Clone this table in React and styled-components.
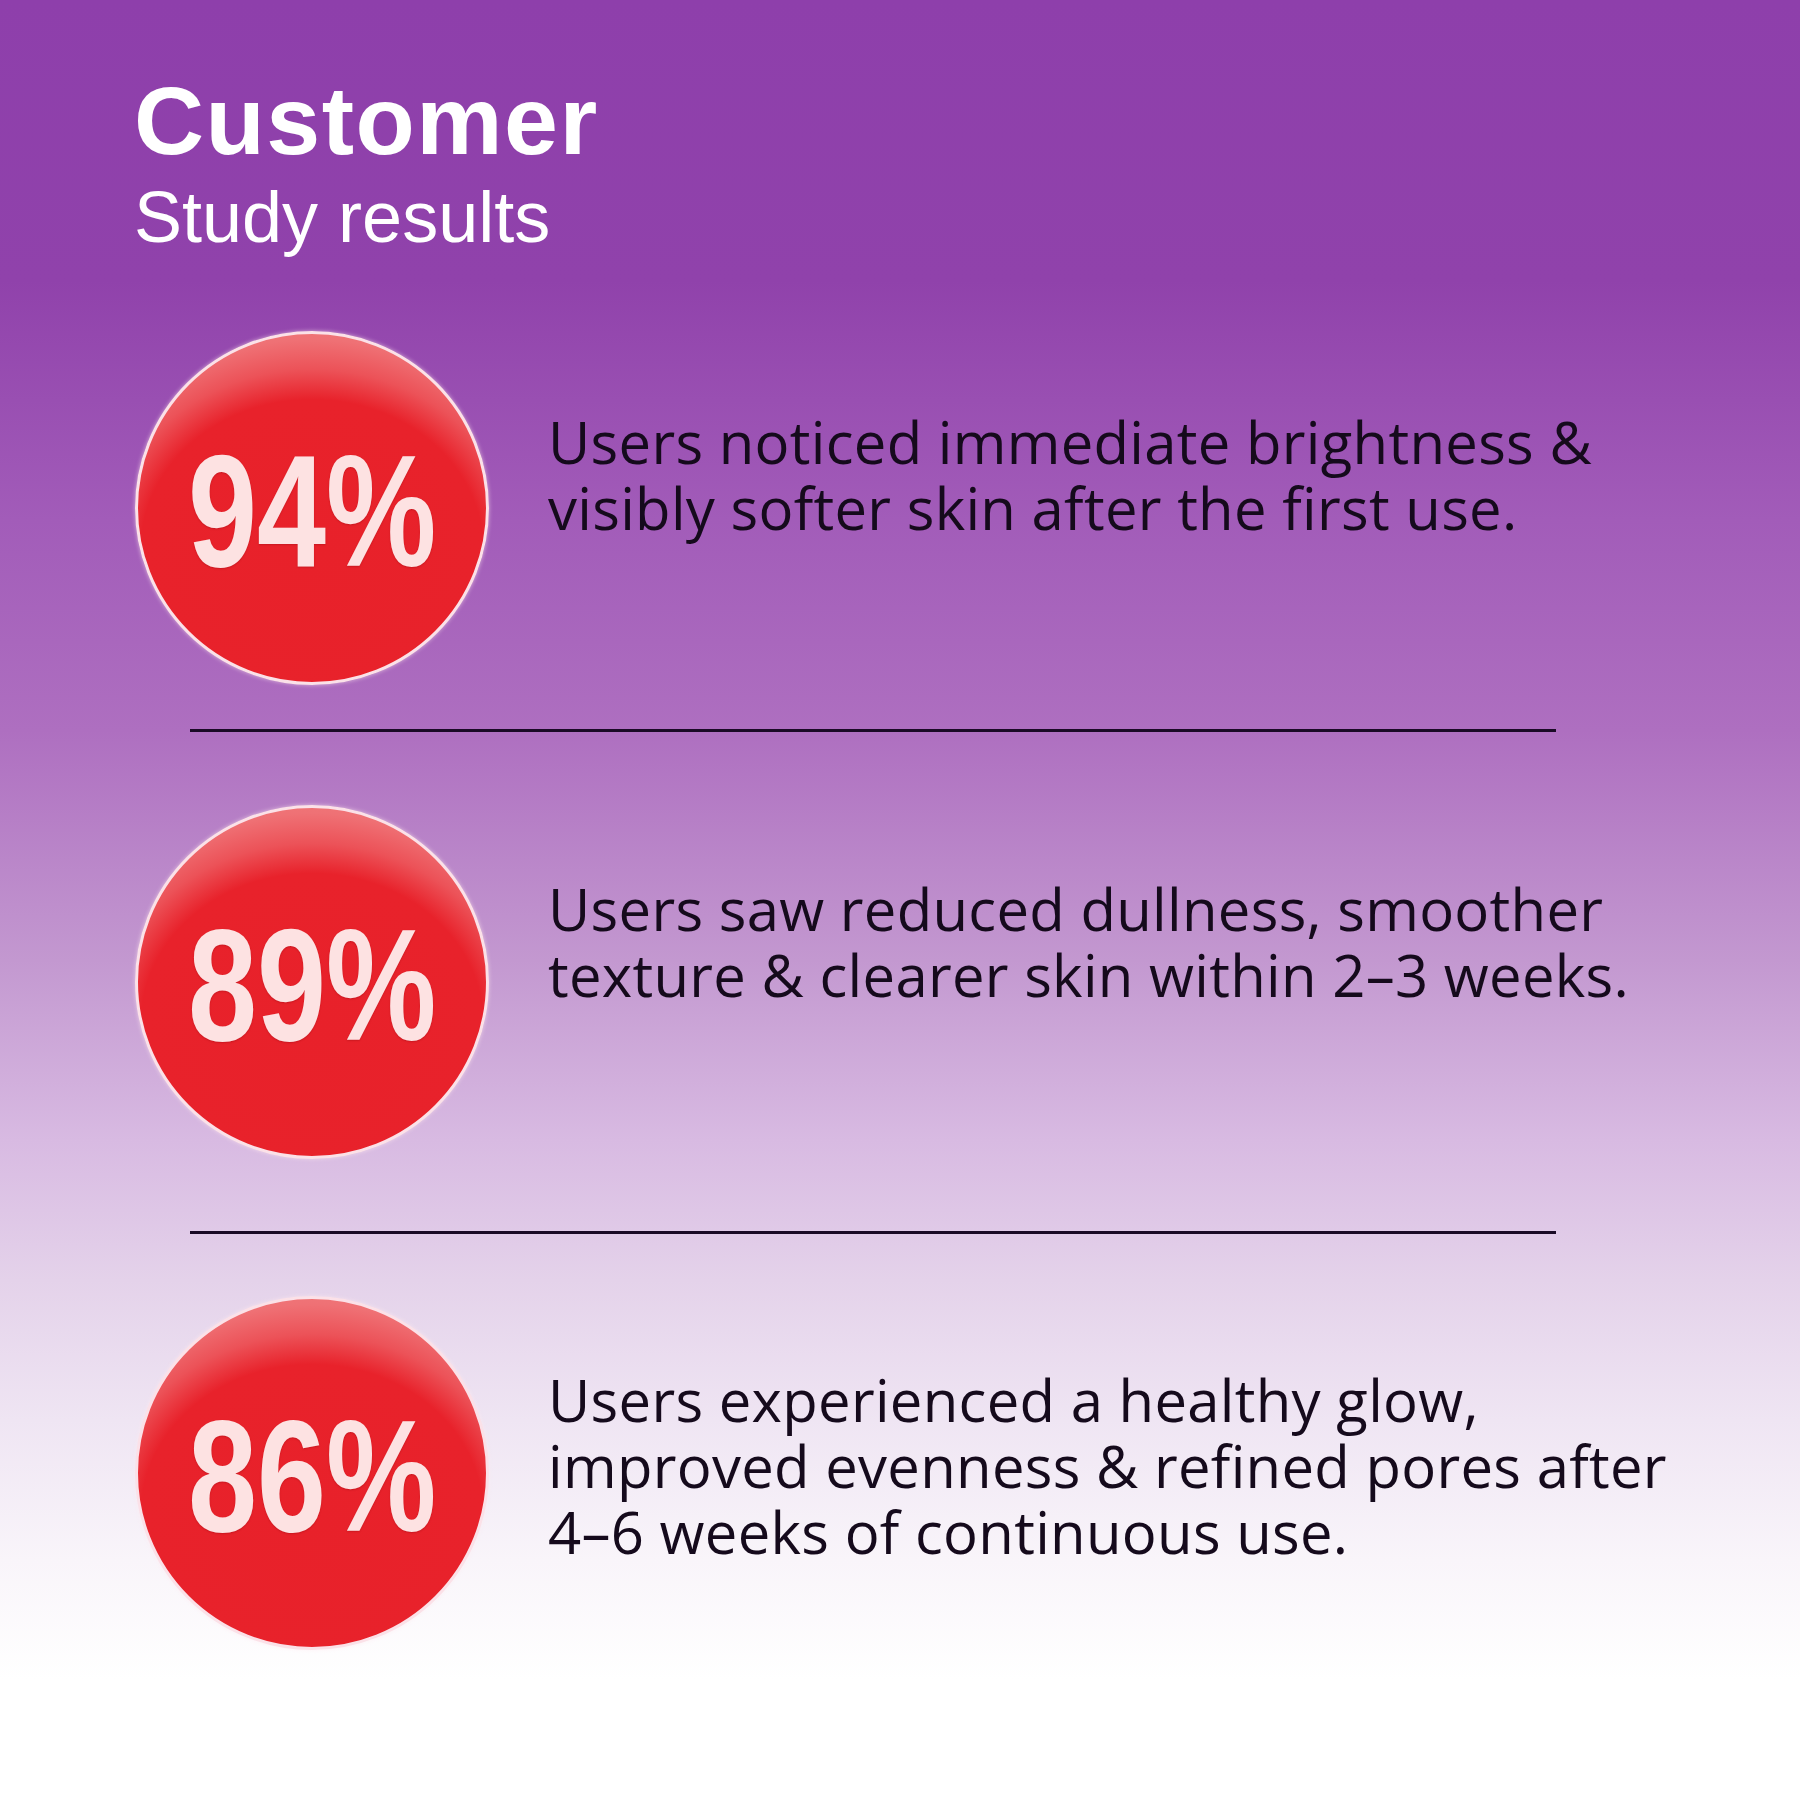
import React from "react";
import styled, { createGlobalStyle } from "styled-components";

const GlobalStyle = createGlobalStyle`
  html, body {
    margin: 0;
    padding: 0;
  }
  * {
    box-sizing: border-box;
  }
`;

const Page = styled.div`
  width: 1800px;
  height: 1800px;
  padding: 73px 0 0 134px;
  overflow: hidden;
  background: linear-gradient(
    180deg,
    #8e3fab 0px,
    #9042ab 280px,
    #a25cb9 520px,
    #ae6fc0 730px,
    #c398d0 960px,
    #d8bae2 1140px,
    #e4d2ea 1280px,
    #efe5f3 1420px,
    #f9f5fa 1560px,
    #ffffff 1680px
  );
`;

const Title = styled.h1`
  margin: 0;
  font-family: "Liberation Sans", Arial, sans-serif;
  font-weight: 700;
  font-size: 97px;
  line-height: 96px;
  letter-spacing: 1.5px;
  color: #ffffff;
`;

const Subtitle = styled.h2`
  margin: 12px 0 0;
  font-family: "Liberation Sans", Arial, sans-serif;
  font-weight: 400;
  font-size: 72px;
  line-height: 72px;
  color: #ffffff;
`;

const List = styled.div`
  display: flex;
  flex-direction: column;
  margin-top: 78px;
`;

const Row = styled.div`
  display: flex;
  align-items: flex-start;
  gap: 59px;
  padding-left: 1px;
`;

const Badge = styled.div`
  flex: 0 0 auto;
  width: 354px;
  height: 354px;
  border-radius: 50%;
  border: 3px solid #fbe1e8;
  display: flex;
  align-items: center;
  justify-content: center;
  background: radial-gradient(
    ellipse 82% 72% at 50% 62%,
    #e8212a 0%,
    #e8222b 60%,
    #ec5258 72%,
    #ef7175 84%,
    #f0807f 100%
  );
  box-shadow: 0 0 4px rgba(255, 235, 240, 0.6);
`;

const Percent = styled.span`
  display: block;
  font-family: "Liberation Sans", Arial, sans-serif;
  font-weight: 700;
  font-size: 159px;
  line-height: 1;
  color: #fde2e2;
  white-space: nowrap;
  transform: translateY(3px) scaleX(0.78);
  text-shadow: 0 1px 2px rgba(130, 0, 10, 0.3);
`;

const Copy = styled.p`
  margin: ${(p) => p.$offset}px 0 0;
  font-family: "Open Sans", "Noto Sans", sans-serif;
  font-weight: 400;
  font-size: 58px;
  line-height: 66px;
  letter-spacing: 0.3px;
  color: #150a1c;
  white-space: nowrap;
`;

const Divider = styled.hr`
  margin: ${(p) => p.$above}px 0 ${(p) => p.$below}px 56px;
  width: 1366px;
  height: 3px;
  border: 0;
  background: #1a0a26;
`;

const results = [
  {
    value: "94%",
    offset: 78,
    lines: ["Users noticed immediate brightness &", "visibly softer skin after the first use."],
  },
  {
    value: "89%",
    offset: 71,
    lines: ["Users saw reduced dullness, smoother", "texture & clearer skin within 2–3 weeks."],
  },
  {
    value: "86%",
    offset: 71,
    lines: [
      "Users experienced a healthy glow,",
      "improved evenness & refined pores after",
      "4–6 weeks of continuous use.",
    ],
  },
];

const gaps = [
  { above: 44, below: 73 },
  { above: 72, below: 62 },
];

export default function App() {
  return (
    <>
      <GlobalStyle />
      <Page>
        <Title>Customer</Title>
        <Subtitle>Study results</Subtitle>
        <List>
          {results.map((r, i) => (
            <React.Fragment key={r.value}>
              <Row>
                <Badge>
                  <Percent>{r.value}</Percent>
                </Badge>
                <Copy $offset={r.offset}>
                  {r.lines.map((l, j) => (
                    <React.Fragment key={j}>
                      {l}
                      {j < r.lines.length - 1 && <br />}
                    </React.Fragment>
                  ))}
                </Copy>
              </Row>
              {gaps[i] && <Divider $above={gaps[i].above} $below={gaps[i].below} />}
            </React.Fragment>
          ))}
        </List>
      </Page>
    </>
  );
}
